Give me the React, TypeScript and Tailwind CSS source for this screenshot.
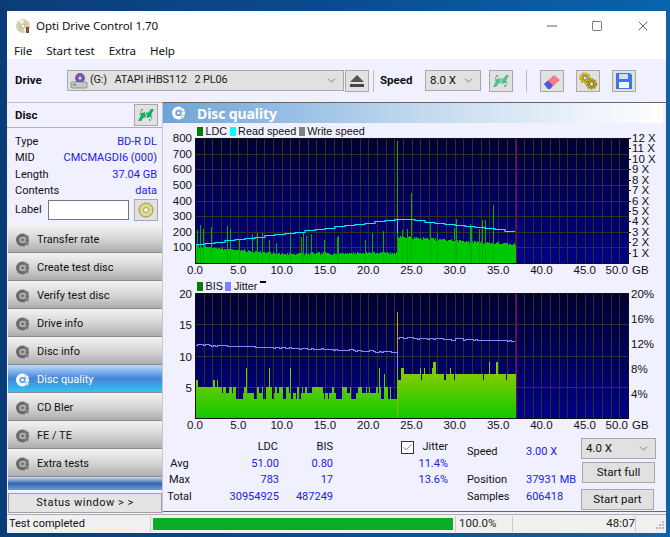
import React from "react";
import { Check, ChevronDown, Minus, Square, X } from "lucide-react";

const uiFont = "font-['Roboto',sans-serif]";
const barFont = "font-['Noto_Sans',sans-serif] text-[11.6px] tracking-[-0.1px]";

function rng(seed: number) {
  let s = seed;
  return () => {
    s = (s * 1664525 + 1013904223) % 4294967296;
    return s / 4294967296;
  };
}

const PX_PER_GB = 8.66;
const PLOT_W = 433;
const PLOT_H = 125;

function DiscIcon({ white = false }: { white?: boolean }) {
  const c = white ? "#ffffff" : "#6a6a6a";
  const h = white ? "#6a9fdc" : "#b4b4b4";
  return (
    <svg width="16" height="16" viewBox="0 0 16 16" className="shrink-0">
      <circle cx="7.5" cy="8" r="6.5" fill={c} />
      <circle cx="7.5" cy="8" r="3.2" fill={h} />
      <circle cx="7.5" cy="8" r="1.4" fill={c} />
      <path d="M10.5 2.5l3.5 2-1.2 2.4-3-1.2zM10.5 10.5l3.5-.3-1 3.3-2.4-1z" fill={c} stroke={h} strokeWidth="0.6" />
    </svg>
  );
}

function Arrows({ faded = false }: { faded?: boolean }) {
  const a = faded ? "#4cc48a" : "#10b060";
  return (
    <svg width="18" height="16" viewBox="0 0 18 16">
      <path d="M1 14l3-6-2-1 6-2 1 6-2-1-3 4z" fill={a} />
      <path d="M17 2l-3 6 2 1-6 2-1-6 2 1 3-4z" fill={a} />
      <path d="M4 3h2M3 5h1M14 13h-2M15 11h-1" stroke="#555" strokeWidth="1" />
    </svg>
  );
}

function ToolBtn({ children, className = "" }: { children: React.ReactNode; className?: string }) {
  return (
    <div className={`flex h-[22px] w-[24px] shrink-0 items-center justify-center border border-[#a8a8a8] bg-[#e1e1e1] ${className}`}>
      {children}
    </div>
  );
}

function Combo({ children, className = "" }: { children: React.ReactNode; className?: string }) {
  return (
    <div className={`flex h-[21px] shrink-0 items-center justify-between border border-[#a8a8a8] bg-[#e1e1e1] pl-1 pr-[5px] text-[11.5px] text-[#111] ${className}`}>
      <div className="flex items-center whitespace-pre">{children}</div>
      <ChevronDown size={13} strokeWidth={1.2} className="text-[#444]" />
    </div>
  );
}

function TitleBar() {
  return (
    <div className="flex h-[26px] items-center bg-white pt-[4px]">
      <svg width="16" height="16" viewBox="0 0 16 16" className="ml-[8px]">
        <circle cx="8" cy="8" r="7" fill="#d8cfa8" />
        <path d="M8 8L3 2h6zM8 8l6 5-4 2z" fill="#f4f0e0" />
        <circle cx="8" cy="8" r="2" fill="#fff" stroke="#888" strokeWidth="0.6" />
        <rect x="11" y="9" width="3" height="6" fill="#8a4a3a" />
      </svg>
      <span className={`ml-[5px] text-[#111] ${barFont}`}>Opti Drive Control 1.70</span>
      <div className="ml-auto flex items-center text-[#111]">
        <Minus size={16} strokeWidth={1} className="mr-[31px]" />
        <Square size={12} strokeWidth={1.1} className="mr-[32px]" />
        <X size={16} strokeWidth={1} className="mr-[15px]" />
      </div>
    </div>
  );
}

function MenuBar() {
  return (
    <div className={`flex h-[22px] items-center gap-[14px] bg-white pl-[7px] pt-[6px] text-[#111] ${barFont}`}>
      <span>File</span>
      <span>Start test</span>
      <span>Extra</span>
      <span>Help</span>
    </div>
  );
}

function Gear({ cx, cy, color }: { cx: number; cy: number; color: string }) {
  return (
    <>
      <circle cx={cx} cy={cy} r="4.6" fill="none" stroke={color} strokeWidth="2.4" strokeDasharray="2 1" />
      <circle cx={cx} cy={cy} r="3.6" fill="none" stroke={color} strokeWidth="1.6" />
      <circle cx={cx} cy={cy} r="2.2" fill="none" stroke="#4a4200" strokeWidth="0.8" />
    </>
  );
}

function Toolbar() {
  return (
    <div className="flex h-[43px] items-center bg-[#f0f0ff] pl-[8px]">
      <span className="w-[52px] text-[11.5px] font-bold text-[#111]">Drive</span>
      <Combo className="w-[277px]">
        <svg width="18" height="18" viewBox="0 0 18 18" className="-ml-[2px] mr-[2px]">
          <circle cx="10" cy="6" r="5" fill="#7a5aa8" />
          <circle cx="10" cy="6" r="1.5" fill="#e8e0f0" />
          <rect x="1" y="10" width="16" height="6" rx="1" fill="#c8c8c8" stroke="#777" strokeWidth="0.7" />
          <rect x="3" y="12" width="3" height="1.5" fill="#30b040" />
        </svg>
        <span className="text-[11px] tracking-[-0.2px] text-[#222]">(G:)   ATAPI iHBS112   2 PL06</span>
      </Combo>
      <ToolBtn className="ml-px">
        <svg width="16" height="14" viewBox="0 0 16 14">
          <path d="M8 1l7 7H1z" fill="#555" />
          <rect x="1" y="10" width="14" height="3" fill="#444" />
        </svg>
      </ToolBtn>
      <div className="ml-[4px] h-[22px] w-px bg-[#bbb]" />
      <span className="ml-[6px] w-[45px] text-[11.5px] font-bold text-[#111]">Speed</span>
      <Combo className="w-[56px]">8.0 X</Combo>
      <ToolBtn className="ml-[8px]">
        <Arrows faded />
      </ToolBtn>
      <div className="ml-[13px] h-[22px] w-px bg-[#bbb]" />
      <ToolBtn className="ml-[13px]">
        <svg width="18" height="18" viewBox="0 0 18 18">
          <path d="M1 12l10-9 6 5-10 9H5z" fill="#f47c84" />
          <path d="M1 12l4-3.5 5 5L7 17H5z" fill="#4a56e0" />
        </svg>
      </ToolBtn>
      <ToolBtn className="ml-[12px]">
        <svg width="20" height="18" viewBox="0 0 20 18">
          <Gear cx={7} cy={6} color="#c4ac10" />
          <Gear cx={13.5} cy={12} color="#a89408" />
        </svg>
      </ToolBtn>
      <ToolBtn className="ml-[12px]">
        <svg width="18" height="18" viewBox="0 0 18 18">
          <path d="M1 1h14l2 2v14H1z" fill="#3a78e0" />
          <rect x="4" y="2" width="9" height="5" fill="#cfe0f8" />
          <rect x="4" y="10" width="10" height="6" fill="#f4f4f4" />
        </svg>
      </ToolBtn>
    </div>
  );
}

function InfoRow({ label, value }: { label: string; value: string }) {
  return (
    <div className="flex h-[16.3px] items-center justify-between pr-px">
      <span className="text-[#111]">{label}</span>
      <span className="text-[#2222e0]">{value}</span>
    </div>
  );
}

const NAV = [
  "Transfer rate",
  "Create test disc",
  "Verify test disc",
  "Drive info",
  "Disc info",
  "Disc quality",
  "CD Bler",
  "FE / TE",
  "Extra tests",
];

function Sidebar() {
  return (
    <div className="flex w-[155px] shrink-0 flex-col bg-[#f0f0ff] text-[11px]">
      <div className="flex h-[26px] items-center justify-between border-y border-t-[#c4c4c4] border-b-[#b0b0b0] pl-[8px] pr-[4px]">
        <span className="pt-px text-[11.5px] font-bold text-[#111]">Disc</span>
        <ToolBtn>
          <Arrows />
        </ToolBtn>
      </div>
      <div className="pb-[4px] pl-[8px] pr-[4px] pt-[6px]">
        <InfoRow label="Type" value="BD-R DL" />
        <InfoRow label="MID" value="CMCMAGDI6 (000)" />
        <InfoRow label="Length" value="37.04 GB" />
        <InfoRow label="Contents" value="data" />
        <div className="flex items-center">
          <span className="w-[33px] shrink-0 text-[#111]">Label</span>
          <div className="h-[20px] w-[81px] shrink-0 border border-[#777] bg-white" />
          <ToolBtn className="ml-[5px]">
            <svg width="16" height="16" viewBox="0 0 16 16">
              <circle cx="8" cy="8" r="7" fill="#e0dc78" stroke="#777" strokeWidth="0.8" />
              <circle cx="8" cy="8" r="2.5" fill="#f8f8e0" stroke="#888" strokeWidth="0.8" />
            </svg>
          </ToolBtn>
        </div>
      </div>
      <div className="flex flex-col pl-px">
        {NAV.map((n) =>
          n === "Disc quality" ? (
            <div
              key={n}
              className="flex h-[28px] items-center gap-[6px] border-b border-[#8a8a8a] bg-gradient-to-b from-[#bcdcfa] via-[#4484d8] to-[#2cc4f4] pl-[7px] pt-[3px] text-white"
            >
              <DiscIcon white />
              <span>{n}</span>
            </div>
          ) : (
            <div
              key={n}
              className="flex h-[28px] items-center gap-[6px] border-b border-[#8a8a8a] bg-gradient-to-b from-[#f4f4f4] via-[#d6d6d6] to-[#aeaeae] pl-[7px] pt-[3px] text-[#111]"
            >
              <DiscIcon />
              <span>{n}</span>
            </div>
          ),
        )}
      </div>
      <div className="ml-px h-[13px] bg-gradient-to-b from-[#d4dcec] via-[#3464ac] to-[#6c9cd8]" />
      <div className="ml-px mt-[3px] flex h-[20px] items-center justify-center border border-[#a0a0a0] bg-[#e4e4e4] pt-px tracking-[0.5px] text-[#111]">
        Status window &gt; &gt;
      </div>
    </div>
  );
}

function Plot({ id, children, hLines }: { id: string; children: React.ReactNode; hLines: number[] }) {
  const vLines = Array.from({ length: 49 }, (_, i) => Math.round((i + 1) * PX_PER_GB) + 0.5);
  return (
    <>
      <defs>
        <linearGradient id={id} x1="0" y1="0" x2="0" y2="1">
          <stop offset="0" stopColor="#000030" />
          <stop offset="1" stopColor="#000088" />
        </linearGradient>
      </defs>
      <rect x="0" y="0" width={PLOT_W} height={PLOT_H} fill={`url(#${id})`} />
      {vLines.map((x) => (
        <line key={x} x1={x} x2={x} y1="0" y2={PLOT_H} stroke="#33302c" strokeWidth="1" />
      ))}
      {hLines.map((y) => (
        <line key={y} x1="0" x2={PLOT_W} y1={Math.round(y) + 0.5} y2={Math.round(y) + 0.5} stroke="#33302c" strokeWidth="1" />
      ))}
      {children}
      <rect x="321" y="0" width="1" height={PLOT_H} fill="#800060" />
      <rect x="0.5" y="0.5" width={PLOT_W} height={PLOT_H} fill="none" stroke="#111" strokeWidth="1" />
    </>
  );
}

const GB_LABELS = [0, 5, 10, 15, 20, 25, 30, 35, 40, 45, 50];
const svgFont = { fontFamily: "'Liberation Sans', sans-serif", fontSize: 11.5, fill: "#111" };

function XAxis() {
  return (
    <>
      {GB_LABELS.map((g) => (
        <text key={g} x={g === 50 ? PLOT_W : g * PX_PER_GB} y={PLOT_H + 11} textAnchor={g === 50 ? "end" : "middle"} {...svgFont}>
          {g.toFixed(1)}
        </text>
      ))}
      <text x={PLOT_W + 4} y={PLOT_H + 11} {...svgFont}>
        GB
      </text>
    </>
  );
}

function LdcChart() {
  const r = rng(7);
  const columns: React.ReactNode[] = [];
  const spikes: Record<number, number> = {
    2: 210, 5: 240, 8: 220, 16: 230, 32: 235, 35: 220, 44: 150, 57: 185, 62: 190, 67: 195, 74: 150, 81: 130, 95: 200,
    106: 165, 108: 190, 111: 170, 116: 185, 129: 145, 142: 165, 143: 175, 170: 145, 177: 190, 188: 205, 202: 783, 207: 210,
    212: 220, 216: 450, 235: 260, 242: 190, 259: 225, 261: 280, 275: 250, 276: 230, 284: 215, 287: 275, 290: 275, 298: 370,
  };
  for (let x = 0; x < 321; x++) {
    const gb = x / PX_PER_GB;
    let base: number;
    if (gb < 10) base = 108 - gb * 5.2;
    else if (gb < 23.3) base = 58 + (gb - 10) * 0.6;
    else base = 168 - (gb - 23.3) * 3.6;
    const v = Math.max(36, base + (r() - 0.5) * 16);
    const h = Math.round((v / 800) * PLOT_H);
    columns.push(<rect key={x} x={x} y={PLOT_H - h} width="1" height={h} fill="#00c800" />);
    const spike = spikes[x];
    if (spike) {
      const sh = Math.round((spike / 800) * PLOT_H);
      columns.push(<rect key={`s${x}`} x={x} y={PLOT_H - sh} width="1" height={sh} fill="#00b000" />);
    }
  }
  const pts: string[] = [];
  for (let x = 0; x < 320; x += 10) {
    const gb = x / PX_PER_GB;
    const sp = gb < 23.4 ? 120 + (gb / 23.4) * 165 : 285 - ((gb - 23.4) / 13.6) * 85;
    const y = Math.round(PLOT_H - (sp / 800) * PLOT_H) + 0.5;
    pts.push(`${x},${y} ${x + 10},${y}`);
  }
  return (
    <svg width="503" height="141" className="block overflow-visible">
      <g transform="translate(32,1)">
        <Plot id="plotA" hLines={[1, 2, 3, 4, 5, 6, 7].map((i) => (i * PLOT_H) / 8)}>
          {columns}
          <rect x="202" y="81" width="1" height="14" fill="#00e8f4" />
          <polyline points={pts.join(" ")} fill="none" stroke="#00f0ff" strokeWidth="1.2" />
        </Plot>
        {[100, 200, 300, 400, 500, 600, 700, 800].map((v) => (
          <text key={v} x="-3" y={PLOT_H - (v / 800) * PLOT_H + 4} textAnchor="end" {...svgFont}>
            {v}
          </text>
        ))}
        {Array.from({ length: 12 }, (_, i) => i + 1).map((v) => {
          const y = Math.round(PLOT_H - (v / 12) * PLOT_H) + 0.5;
          return (
            <g key={v}>
              <line x1={PLOT_W} x2={PLOT_W + 3} y1={y} y2={y} stroke="#111" />
              <text x={PLOT_W + 4} y={y + 3} {...svgFont}>
                {v} X
              </text>
            </g>
          );
        })}
        <XAxis />
      </g>
    </svg>
  );
}

function BisChart() {
  const r = rng(19);
  const columns: React.ReactNode[] = [];
  const scale = PLOT_H / 20;
  let x = 0;
  while (x < 321) {
    const gb = x / PX_PER_GB;
    const n = r();
    let v: number;
    let run = 1 + Math.floor(r() * 3);
    if (gb < 3) v = n < 0.6 ? 5 : n < 0.85 ? 6 : 7;
    else if (gb < 23.3) v = n < 0.3 ? 3 : n < 0.6 ? 4 : n < 0.9 ? 5 : 6 + Math.floor(r() * 3);
    else v = n < 0.1 ? 6 : n < 0.78 ? 7 : n < 0.93 ? 8 : 9;
    if (v > 5 && gb >= 3 && gb < 23.3) run = 1;
    if (gb >= 23.3 && v === 7) run = 2 + Math.floor(r() * 5);
    for (let i = 0; i < run && x < 321; i++, x++) {
      const h = Math.round(v * scale);
      columns.push(<rect key={x} x={x} y={PLOT_H - h} width="1" height={h} fill="url(#bisFill)" />);
    }
  }
  const jr = rng(3);
  const pts: string[] = [];
  for (let px = 0; px < 320; px += 2) {
    const gb = px / PX_PER_GB;
    let j: number;
    if (gb < 23.3) j = 11.8 - (gb / 23.3) * 1.2;
    else j = 12.9 - ((gb - 23.3) / 13.7) * 0.5;
    j += (jr() - 0.5) * 0.25;
    const y = Math.round(PLOT_H - j * scale) + 0.5;
    pts.push(`${px},${y} ${px + 2},${y}`);
  }
  return (
    <svg width="503" height="141" className="block overflow-visible">
      <defs>
        <linearGradient id="bisFill" gradientUnits="userSpaceOnUse" x1="0" y1={PLOT_H} x2="0" y2={PLOT_H - 40}>
          <stop offset="0" stopColor="#10c800" />
          <stop offset="1" stopColor="#78cc00" />
        </linearGradient>
      </defs>
      <g transform="translate(32,1)">
        <Plot id="plotB" hLines={[1, 2, 3].map((i) => i * 5 * scale)}>
          {columns}
          <polyline points={pts.join(" ")} fill="none" stroke="#8888ff" strokeWidth="1" shapeRendering="crispEdges" />
          <rect x="202" y={PLOT_H - 17 * scale} width="1" height={6 * scale} fill="#c8a000" />
          <rect x="202" y={PLOT_H - 11 * scale} width="1" height={3 * scale} fill="#8484f4" />
          <rect x="202" y={PLOT_H - 8 * scale} width="1" height={8 * scale} fill="#80c000" />
        </Plot>
        {[5, 10, 15, 20].map((v) => (
          <text key={v} x="-3" y={PLOT_H - v * scale + 5} textAnchor="end" {...svgFont}>
            {v}
          </text>
        ))}
        {[4, 8, 12, 16, 20].map((v) => (
          <text key={v} x={PLOT_W + 3} y={PLOT_H - (v / 20) * PLOT_H + 5} {...svgFont}>
            {v}%
          </text>
        ))}
        <XAxis />
      </g>
    </svg>
  );
}

function Legend({ items }: { items: [string, string][] }) {
  return (
    <div className="mt-[2px] flex h-[12px] items-center gap-[2.5px] pl-[34px] pt-px font-['Liberation_Sans',sans-serif] text-[10.8px] leading-none text-[#111]">
      {items.map(([c, label]) => (
        <React.Fragment key={label}>
          <span className={`h-[9px] w-[6px] ${c}`} />
          <span>{label}</span>
        </React.Fragment>
      ))}
    </div>
  );
}

function Stats() {
  const label = "w-[25px] text-center text-[#111]";
  return (
    <div className="mb-[2px] flex flex-1 border-b border-[#666] pt-[6px] text-[11px]">
      <div className="w-[116px] pl-[4px]">
        <div className="flex h-[17px] items-center justify-end pr-px text-[#111]">LDC</div>
        <div className="flex h-[16.3px] items-center justify-between">
          <span className={label}>Avg</span>
          <span className="text-[#2222e0]">51.00</span>
        </div>
        <div className="flex h-[16.3px] items-center justify-between">
          <span className={label}>Max</span>
          <span className="text-[#2222e0]">783</span>
        </div>
        <div className="flex h-[16.3px] items-center justify-between">
          <span className={label}>Total</span>
          <span className="text-[#2222e0]">30954925</span>
        </div>
      </div>
      <div className="w-[54px] text-right">
        <div className="flex h-[17px] items-center justify-end text-[#111]">BIS</div>
        <div className="flex h-[16.3px] items-center justify-end text-[#2222e0]">0.80</div>
        <div className="flex h-[16.3px] items-center justify-end text-[#2222e0]">17</div>
        <div className="flex h-[16.3px] items-center justify-end text-[#2222e0]">487249</div>
      </div>
      <div className="ml-[68px] w-[47px]">
        <div className="flex h-[17px] items-center justify-between">
          <span className="flex h-[13px] w-[13px] items-center justify-center border border-[#333] bg-white">
            <Check size={11} strokeWidth={1.5} className="text-[#444]" />
          </span>
          <span className="text-[#111]">Jitter</span>
        </div>
        <div className="flex h-[16.3px] items-center justify-end text-[#2222e0]">11.4%</div>
        <div className="flex h-[16.3px] items-center justify-end text-[#2222e0]">13.6%</div>
      </div>
      <div className="ml-[19px] w-[114px]">
        <div className="mt-[5px] flex h-[16.3px] items-center">
          <span className="w-[59px] text-[#111]">Speed</span>
          <span className="text-[#2222e0]">3.00 X</span>
        </div>
        <div className="mt-[12px] flex h-[16.3px] items-center">
          <span className="w-[59px] text-[#111]">Position</span>
          <span className="whitespace-nowrap text-[#2222e0]">37931 MB</span>
        </div>
        <div className="flex h-[16.3px] items-center">
          <span className="w-[59px] text-[#111]">Samples</span>
          <span className="text-[#2222e0]">606418</span>
        </div>
      </div>
      <div className="-mt-px flex w-[76px] flex-col">
        <Combo className="w-[75px]">4.0 X</Combo>
        <div className="ml-px mt-[3px] flex h-[21px] w-[73px] items-center justify-center border border-[#a8a8a8] bg-[#e1e1e1] text-[11.5px] text-[#111]">
          Start full
        </div>
        <div className="mt-[6px] flex h-[21px] w-[73px] items-center justify-center border border-[#a8a8a8] bg-[#e1e1e1] text-[11.5px] text-[#111]">
          Start part
        </div>
      </div>
    </div>
  );
}

function MainPanel() {
  return (
    <div className="flex min-w-0 flex-1 flex-col border-l border-t border-l-[#c8c8c8] border-t-[#666] bg-[#f0f0ff]">
      <div className="mr-[3px] flex h-[20px] items-center gap-[10px] bg-gradient-to-r from-[#6ea4d8] via-[#c0d8ee] to-white pl-[8px]">
        <DiscIcon white />
        <span className="font-['Noto_Sans',sans-serif] text-[14px] font-bold tracking-[-0.1px] text-white">Disc quality</span>
      </div>
      <Legend
        items={[
          ["bg-[#008000]", "LDC"],
          ["bg-[#00ffff]", "Read speed"],
          ["bg-[#808080]", "Write speed"],
        ]}
      />
      <LdcChart />
      <div className="relative">
        <Legend
          items={[
            ["bg-[#008000]", "BIS"],
            ["bg-[#8080ff]", "Jitter"],
          ]}
        />
        <span className="absolute left-[97px] top-[3px] h-[2px] w-[6px] bg-black" />
      </div>
      <BisChart />
      <Stats />
    </div>
  );
}

function StatusBar() {
  return (
    <div className="flex h-[19px] items-center border-t border-[#b0b0b0] bg-[#f0f0f0] text-[11px] text-[#111]">
      <span className="w-[143px] pl-[2px]">Test completed</span>
      <div className="h-[16px] w-px bg-[#ccc]" />
      <div className="ml-[2px] h-[12px] w-[300px] bg-[#08ae28]" />
      <div className="ml-[2px] h-[16px] w-px bg-[#ccc]" />
      <span className="w-[56px] pl-[3px] text-[11.5px] text-[#222]">100.0%</span>
      <div className="h-[16px] w-px bg-[#ccc]" />
      <span className="w-[122px] text-right text-[11.5px] text-[#222]">48:07</span>
      <div className="h-[16px] w-px bg-[#ccc]" />
      <svg width="12" height="12" viewBox="0 0 12 12" className="ml-[17px]">
        <path d="M9 3h2v2H9zM6 6h2v2H6zM9 6h2v2H9zM3 9h2v2H3zM6 9h2v2H6zM9 9h2v2H9z" fill="#bbb" />
      </svg>
    </div>
  );
}

export default function App() {
  return (
    <div className="h-[537px] w-[670px] overflow-hidden bg-gradient-to-r from-[#0a3c78] via-[#0a4c90] to-[#0a64ac] pl-[7px] pt-[11px]">
      <div className={`flex h-[522px] w-[659px] flex-col ${uiFont}`}>
        <TitleBar />
        <MenuBar />
        <Toolbar />
        <div className="flex h-[412px] min-h-0">
          <Sidebar />
          <MainPanel />
        </div>
        <StatusBar />
      </div>
    </div>
  );
}
